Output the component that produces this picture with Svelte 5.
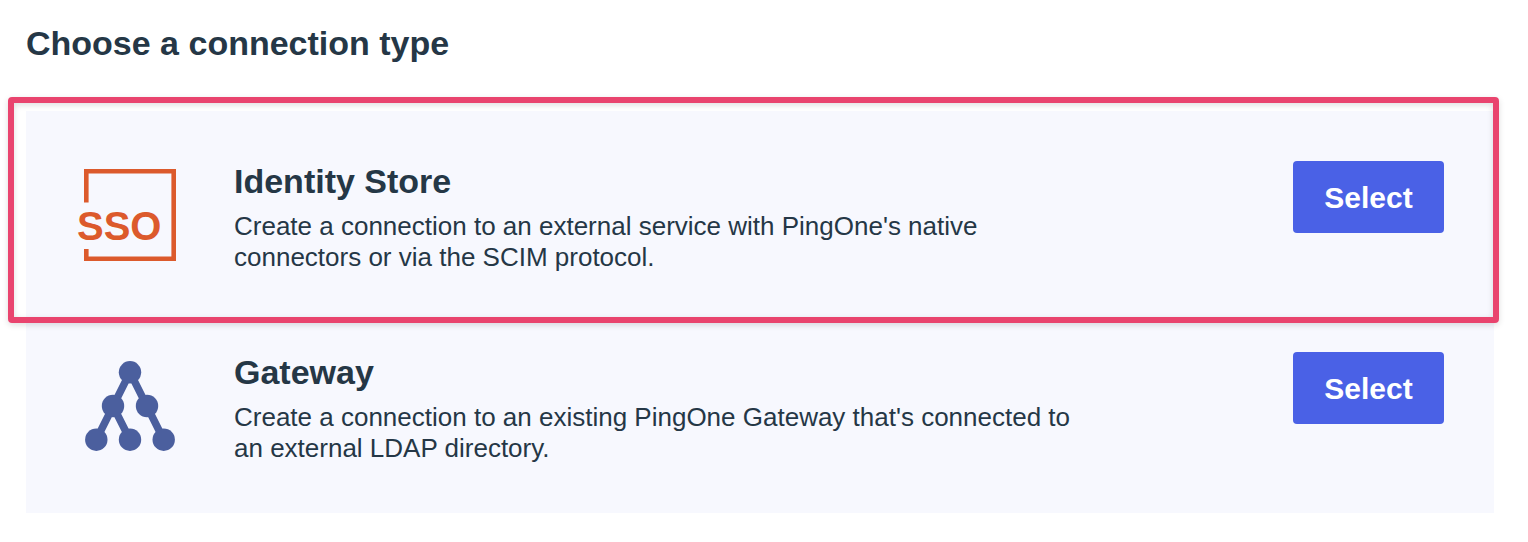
<script>
  const types = [
    {
      id: 'store',
      title: 'Identity Store',
      lines: ["Create a connection to an external service with PingOne's native", 'connectors or via the SCIM protocol.'],
    },
    {
      id: 'gateway',
      title: 'Gateway',
      lines: ["Create a connection to an existing PingOne Gateway that's connected to", 'an external LDAP directory.'],
    },
  ];
</script>

<main>
  <h1>Choose a connection type</h1>
  <div class="list">
    {#each types as type}
      <section class:chosen={type.id === 'store'}>
        <div class="icon">
          {#if type.id === 'store'}
            <svg width="104" height="96" viewBox="0 0 104 96" aria-hidden="true">
              <path d="M10.3 36.5V5.3H97.7V92.7H10.3V83" fill="none" stroke="#dc5a2c" stroke-width="4.6" />
              <text x="1" y="74" font-size="40" font-weight="700" fill="#dc5a2c">SSO</text>
            </svg>
          {:else}
            <svg width="104" height="96" viewBox="0 0 104 96" aria-hidden="true">
              <path d="M20.3 82.7L54 15.3L87.7 82.7M37 49L54 82.7" fill="none" stroke="#4b5f9e" stroke-width="7.5" />
              <g fill="#4b5f9e">
                <circle cx="54" cy="15.3" r="11.2" />
                <circle cx="37" cy="49" r="11.2" />
                <circle cx="71" cy="49" r="11.2" />
                <circle cx="20.3" cy="82.7" r="11.2" />
                <circle cx="54" cy="82.7" r="11.2" />
                <circle cx="87.7" cy="82.7" r="11.2" />
              </g>
            </svg>
          {/if}
        </div>
        <div class="copy">
          <h2>{type.title}</h2>
          <p>{type.lines[0]}<br />{type.lines[1]}</p>
        </div>
        <button type="button" aria-label="Select {type.title}">Select</button>
      </section>
    {/each}
  </div>
</main>

<style>
  :global(body) {
    margin: 0;
    background: #fff;
  }
  main {
    padding: 23px 34px 29px 26px;
    font-family: "Liberation Sans", Arial, sans-serif;
    color: #253746;
  }
  h1,
  h2 {
    margin: 0;
    font-size: 34px;
    line-height: 40px;
    font-weight: 700;
  }
  .list {
    margin-top: 48px;
    background: #f7f8fe;
  }
  section {
    position: relative;
    display: flex;
    align-items: flex-start;
    padding: 50px 50px 40px;
  }
  section + section {
    padding-top: 39px;
    padding-bottom: 49px;
  }
  .chosen::after {
    content: "";
    position: absolute;
    inset: -14px -5px -10px -18px;
    border: 6px solid #e9446e;
    border-radius: 4px;
    box-shadow: 0 2px 6px #0002, inset 0 2px 6px #0002;
    pointer-events: none;
  }
  .icon {
    flex: none;
    width: 158px;
    padding-top: 5px;
  }
  svg {
    display: block;
  }
  .copy {
    flex: 1;
  }
  p {
    margin: 10px 0 0;
    font-size: 26px;
    line-height: 31px;
  }
  button {
    flex: none;
    width: 151px;
    height: 72px;
    padding: 2px 0 0;
    border: 0;
    border-radius: 4px;
    background: #4a61e6;
    color: #fff;
    font: 700 30px "Liberation Sans", Arial, sans-serif;
  }
</style>
